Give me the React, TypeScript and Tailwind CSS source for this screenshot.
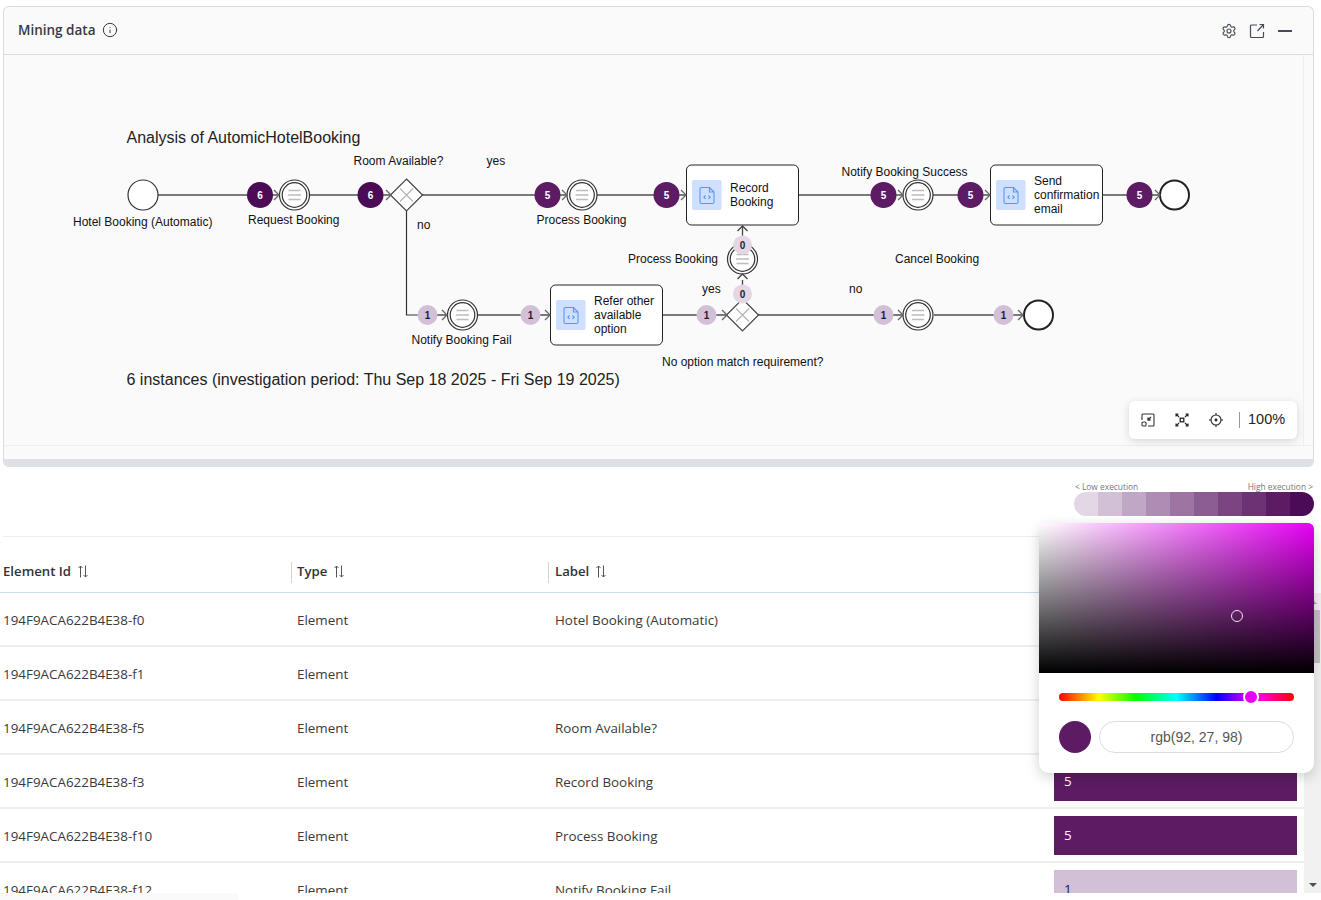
import React from 'react'
import { Info, Settings } from 'lucide-react'

const LINE = '#7a7a7a'
const HIGH = '#5c1b62'
const TOP = '#4b0b57'
const LOW = '#d2c1d6'

const legend = ['#e3d7e5', '#d2c1d6', '#bfa7c5', '#ae8db2', '#9e75a2', '#8c5d93', '#7b4582', '#6c3273', '#5c1b62', '#4b0b57']

const rows = [
  { id: '194F9ACA622B4E38-f0', label: 'Hotel Booking (Automatic)', count: 6, high: true },
  { id: '194F9ACA622B4E38-f1', label: '', count: 6, high: true },
  { id: '194F9ACA622B4E38-f5', label: 'Room Available?', count: 6, high: true },
  { id: '194F9ACA622B4E38-f3', label: 'Record Booking', count: 5, high: true },
  { id: '194F9ACA622B4E38-f10', label: 'Process Booking', count: 5, high: true },
  { id: '194F9ACA622B4E38-f12', label: 'Notify Booking Fail', count: 1, high: false },
]

const Flow = ({ d, dark }: { d: string; dark?: boolean }) => (
  <path d={d} fill="none" stroke={dark ? '#333333' : LINE} strokeWidth={dark ? 1.2 : 2} />
)

const Chevron = ({ x, y }: { x: number; y: number }) => (
  <path d={`M${x - 5} ${y - 5} L${x} ${y} L${x - 5} ${y + 5}`} fill="none" stroke="#666666" strokeWidth={1.3} />
)

const ChevronUp = ({ x, y }: { x: number; y: number }) => (
  <path d={`M${x - 5} ${y + 5} L${x} ${y} L${x + 5} ${y + 5}`} fill="none" stroke="#444444" strokeWidth={1.3} />
)

const Token = ({ x, y, n, color, r = 13, dark }: { x: number; y: number; n: number; color: string; r?: number; dark?: boolean }) => (
  <g>
    <circle cx={x} cy={y} r={r} fill={color} />
    <text x={x} y={y + 3.5} textAnchor="middle" fontSize="10" fontWeight="700" fill={dark ? '#1c1c3a' : '#ffffff'}>
      {n}
    </text>
  </g>
)

const EventNode = ({ x, y }: { x: number; y: number }) => (
  <g>
    <circle cx={x} cy={y} r={15} fill="#ffffff" stroke="#333333" strokeWidth={1.2} />
    <circle cx={x} cy={y} r={12.3} fill="#ffffff" stroke="#333333" strokeWidth={1.2} />
    <path d={`M${x - 6} ${y - 4.5} H${x + 6} M${x - 6.5} ${y} H${x + 6.5} M${x - 6} ${y + 4.5} H${x + 6}`} stroke="#bdbdbd" strokeWidth={1.4} />
  </g>
)

const Gateway = ({ x, y }: { x: number; y: number }) => (
  <g>
    <path d={`M${x} ${y - 16} L${x + 16} ${y} L${x} ${y + 16} L${x - 16} ${y} Z`} fill="#ffffff" stroke="#444444" strokeWidth={1.2} />
    <path d={`M${x - 6.5} ${y - 6.5} L${x + 6.5} ${y + 6.5} M${x + 6.5} ${y - 6.5} L${x - 6.5} ${y + 6.5}`} stroke="#b5b5b5" strokeWidth={1.2} />
  </g>
)

const EndNode = ({ x, y }: { x: number; y: number }) => (
  <circle cx={x} cy={y} r={14.5} fill="#ffffff" stroke="#222222" strokeWidth={2} />
)

const Task = ({ x, y, lines }: { x: number; y: number; lines: string[] }) => {
  const first = y + 30 - (lines.length - 1) * 7 + 4
  return (
    <g>
      <rect x={x + 0.5} y={y} width={112} height={60} rx={5} fill="#ffffff" stroke="#222222" strokeWidth={1} />
      <rect x={x + 6} y={y + 15} width={29.5} height={30} rx={2} fill="#cfe0ff" />
      <path
        d={`M${x + 15.5} ${y + 22.5} h8 l4.5 4.5 v10 a1.5 1.5 0 0 1 -1.5 1.5 h-11 a1.5 1.5 0 0 1 -1.5 -1.5 v-13 a1.5 1.5 0 0 1 1.5 -1.5 Z M${x + 23.5} ${y + 22.5} v4.5 h4.5 M${x + 19.5} ${y + 30.5} l-1.7 1.7 l1.7 1.7 M${x + 22.5} ${y + 30.5} l1.7 1.7 l-1.7 1.7`}
        fill="none"
        stroke="#5b96f7"
        strokeWidth={1.1}
      />
      {lines.map((line, i) => (
        <text key={line} x={x + 44} y={first + i * 14} fontSize="12" fill="#111111">
          {line}
        </text>
      ))}
    </g>
  )
}

const Label = ({ x, y, children }: { x: number; y: number; children: string }) => (
  <text x={x} y={y} fontSize="12" fill="#111111">
    {children}
  </text>
)

const Diagram = () => (
  <svg viewBox="4 55 1299 390" className="block w-[1299px] h-[390px] font-['Liberation_Sans',sans-serif]">
    <text x={126.5} y={143} fontSize="16" fill="#222222">Analysis of AutomicHotelBooking</text>
    <text x={126.5} y={385} fontSize="16" fill="#222222">6 instances (investigation period: Thu Sep 18 2025 - Fri Sep 19 2025)</text>

    <Flow d="M158 195 H280 M310 195 H391 M422 195 H574 M597 195 H686 M799 195 H910 M933 195 H990 M1103 195 H1160" />
    <Flow d="M406.5 211 V315 H420" dark />
    <Flow d="M420 315 H447 M478 315 H550 M662 315 H727 M758 315 H910 M934 315 H1024" />
    <path d="M742.5 299 V280 M742.5 244 V227" stroke="#444444" strokeWidth={1.3} />

    <circle cx={143} cy={195} r={15} fill="#ffffff" stroke="#333333" strokeWidth={1.2} />
    <EventNode x={294.5} y={195} />
    <Gateway x={406.5} y={195} />
    <EventNode x={582} y={195} />
    <EventNode x={918} y={195} />
    <EndNode x={1174.5} y={195} />
    <EventNode x={462.5} y={315} />
    <Gateway x={742.5} y={315} />
    <EventNode x={742.5} y={259} />
    <EventNode x={918} y={315} />
    <EndNode x={1038.5} y={315} />

    <Task x={686} y={165} lines={['Record', 'Booking']} />
    <Task x={990} y={165} lines={['Send', 'confirmation', 'email']} />
    <Task x={550} y={285} lines={['Refer other', 'available', 'option']} />

    <Chevron x={279} y={195} />
    <Chevron x={391} y={195} />
    <Chevron x={567} y={195} />
    <Chevron x={686} y={195} />
    <Chevron x={903} y={195} />
    <Chevron x={990} y={195} />
    <Chevron x={1160} y={195} />
    <Chevron x={447} y={315} />
    <Chevron x={550} y={315} />
    <Chevron x={727} y={315} />
    <Chevron x={903} y={315} />
    <Chevron x={1023} y={315} />
    <ChevronUp x={742.5} y={274} />
    <ChevronUp x={742.5} y={226} />

    <Token x={260} y={195} n={6} color={TOP} />
    <Token x={370.5} y={195} n={6} color={TOP} />
    <Token x={547.5} y={195} n={5} color={HIGH} />
    <Token x={666.5} y={195} n={5} color={HIGH} />
    <Token x={883.5} y={195} n={5} color={HIGH} />
    <Token x={970.5} y={195} n={5} color={HIGH} />
    <Token x={1139.5} y={195} n={5} color={HIGH} />
    <Token x={427.5} y={315} n={1} color={LOW} r={10} dark />
    <Token x={530.5} y={315} n={1} color={LOW} r={10} dark />
    <Token x={706.5} y={315} n={1} color={LOW} r={10} dark />
    <Token x={883.5} y={315} n={1} color={LOW} r={10} dark />
    <Token x={1003.5} y={315} n={1} color={LOW} r={10} dark />
    <Token x={742.5} y={294} n={0} color="#e3d7e5" r={9.5} dark />
    <Token x={742.5} y={245} n={0} color="#e3d7e5" r={9.5} dark />

    <Label x={73} y={226}>Hotel Booking (Automatic)</Label>
    <Label x={248} y={224}>Request Booking</Label>
    <Label x={353.5} y={165}>Room Available?</Label>
    <Label x={486.5} y={165}>yes</Label>
    <Label x={417} y={229}>no</Label>
    <Label x={536.5} y={224}>Process Booking</Label>
    <Label x={841.5} y={176}>Notify Booking Success</Label>
    <Label x={628} y={263}>Process Booking</Label>
    <Label x={895} y={263}>Cancel Booking</Label>
    <Label x={702} y={293}>yes</Label>
    <Label x={849} y={293}>no</Label>
    <Label x={411.5} y={344}>Notify Booking Fail</Label>
    <Label x={662} y={366}>No option match requirement?</Label>
  </svg>
)

const ZoomBar = () => (
  <div className="absolute left-[1125px] top-[346px] w-[168px] h-[38px] flex items-center bg-white rounded-md shadow-[0_2px_8px_rgba(0,0,0,0.15)] text-[#222222]">
    <svg viewBox="0 0 14 14" className="w-[14px] h-[14px] ml-[12px] text-[#333333]" fill="none" stroke="currentColor" strokeWidth="1.1">
      <path d="M1 7V2a1 1 0 0 1 1-1h10a1 1 0 0 1 1 1v10a1 1 0 0 1-1 1H7" />
      <rect x="1" y="9" width="4" height="4" rx="1" />
      <path d="M10 4 7 7M7 4.5V7h2.5" strokeWidth="1.3" />
    </svg>
    <svg viewBox="0 0 14 14" className="w-[14px] h-[14px] ml-[20px]" fill="none" stroke="currentColor" strokeWidth="1.1">
      <path d="M1 3.5V1h2.5M1 1l3 3M13 3.5V1h-2.5M13 1l-3 3M13 10.5V13h-2.5M13 13l-3-3M1 10.5V13h2.5M1 13l3-3" />
      <rect x="5.2" y="5.2" width="3.6" height="3.6" strokeWidth="1.3" />
    </svg>
    <svg viewBox="0 0 14 14" className="w-[14px] h-[14px] ml-[20px]" fill="none" stroke="currentColor" strokeWidth="1.1">
      <circle cx="7" cy="7" r="5" />
      <circle cx="7" cy="7" r="0.9" fill="currentColor" />
      <path d="M7 0v2M7 12v2M0 7h2M12 7h2" />
    </svg>
    <div className="w-px h-[16px] bg-[#999999] ml-[16px]" />
    <span className="ml-[8px] text-[14.5px] font-['Liberation_Sans',sans-serif]">100%</span>
  </div>
)

const Header = () => (
  <div className="h-[48px] flex items-center border-b border-[#dcdcdc] pl-[14px] pr-[21px]">
    <span className="text-[13.5px] font-semibold text-[#333b45] font-['Open_Sans',sans-serif]">Mining data</span>
    <Info size={16} strokeWidth={1.5} className="ml-[6px] text-[#333b45] -mt-[2px]" />
    <div className="ml-auto flex items-center text-[#444c55]">
      <Settings size={16} strokeWidth={1.7} />
      <svg viewBox="0 0 16 16" className="w-[16px] h-[16px] ml-[12px]" fill="none" stroke="currentColor" strokeWidth="1.2">
        <path d="M8 2H2.5a1 1 0 0 0-1 1v10.5a1 1 0 0 0 1 1h11a1 1 0 0 0 1-1V9" />
        <path d="M8.5 8 14.5 1.5M10.5 1.5h4v4" />
      </svg>
      <div className="w-[14px] h-[1.5px] bg-[#444c55] ml-[13px] mt-[1px]" />
    </div>
  </div>
)

const SortArrows = () => (
  <svg viewBox="0 0 10 13" className="w-[10px] h-[13px] ml-[7px] -mt-[2px] text-[#555555]" fill="none" stroke="currentColor" strokeWidth="1">
    <path d="M2.5 12.5V1M0.5 3 2.5 1l2 2M7.5 0.5V12M5.5 10l2 2 2-2" />
  </svg>
)

const SortHead = ({ title, width, divider }: { title: string; width: string; divider?: string }) => (
  <div className={`${width} flex items-center h-[21px]`}>
    {divider && <div className={`w-px h-[21px] bg-[#d4d4d4] ${divider}`} />}
    <span className="text-[13.2px] font-semibold text-[#333333]">{title}</span>
    <SortArrows />
  </div>
)

const Row = ({ id, label, count, high }: { id: string; label: string; count: number; high: boolean }) => (
  <div className="h-[54px] flex items-center pl-[3px] pt-[2px] border-b-2 border-[#eeeeee] text-[13.4px] text-[#3a3a3a] shrink-0">
    <div className="w-[294px]">{id}</div>
    <div className="w-[258px]">Element</div>
    <div className="w-[499px]">{label}</div>
    <div className={`w-[243px] h-[39px] -mt-[2px] flex items-center pl-[10px] ${high ? 'bg-[#5c1b62] text-white' : 'bg-[#d2c1d6] text-[#222222]'}`}>
      {count}
    </div>
  </div>
)

const Scrollbar = () => (
  <div className="w-[17px] h-full bg-[#f1f1f1] flex flex-col items-center shrink-0">
    <div className="h-[17px] flex items-center justify-center">
      <div className="w-0 h-0 border-x-[4px] border-x-transparent border-b-[4px] border-b-[#a3a3a3]" />
    </div>
    <div className="w-[15px] h-[53px] bg-[#c1c1c1]" />
    <div className="mt-auto h-[17px] flex items-center justify-center">
      <div className="w-0 h-0 border-x-[4px] border-x-transparent border-t-[4px] border-t-[#505050]" />
    </div>
  </div>
)

const ColorPicker = () => (
  <div className="absolute left-[1039px] top-[523px] w-[275px] h-[250px] bg-white rounded-[10px] shadow-[0_4px_14px_rgba(0,0,0,0.18)]">
    <div className="relative h-[150px] rounded-t-[6px] bg-[linear-gradient(to_top,#000000,rgba(0,0,0,0)),linear-gradient(to_right,#ffffff,#e600f5)]">
      <div className="absolute left-[192px] top-[87px] w-[12px] h-[12px] rounded-full border border-[#e8e8e8]" />
    </div>
    <div className="relative mt-[20px] mx-[20px] h-[8px] rounded-full bg-[linear-gradient(to_right,#ff0000,#ffff00_17%,#00ff00_33%,#00ffff_50%,#0000ff_67%,#ff00ff_83%,#ff0000)]">
      <div className="absolute left-[184px] -top-[4px] w-[16px] h-[16px] rounded-full bg-[#e600f5] border-2 border-white" />
    </div>
    <div className="flex items-center mt-[20px] mx-[20px]">
      <div className="w-[32px] h-[32px] rounded-full bg-[#5c1b62]" />
      <div className="ml-[8px] flex-1 h-[32px] rounded-full border border-[#dddddd] flex items-center justify-center text-[14px] text-[#555555] font-['Liberation_Sans',sans-serif]">
        rgb(92, 27, 98)
      </div>
    </div>
  </div>
)

export default function App() {
  return (
    <div className="relative w-[1321px] h-[900px] overflow-hidden bg-white font-['Open_Sans',sans-serif]">
      <div className="pt-[6px] pl-[3px]">
        <div className="w-[1311px] h-[461px] rounded-[6px] border border-[#dcdcdc] border-b-0 bg-[#fafafa] overflow-hidden flex flex-col">
          <Header />
          <div className="relative h-[391px] border-b border-[#efefef]">
            <Diagram />
            <div className="absolute left-[1299px] top-0 w-px h-full bg-[#efefef]" />
            <ZoomBar />
          </div>
          <div className="h-[13px]" />
          <div className="flex-1 bg-[#dde0e4]" />
        </div>
      </div>

      <div className="h-[70px] w-[1304px] ml-[3px] border-b border-[#eeeeee]" />
      <div className="absolute left-[1075px] top-[482px] w-[238px]">
        <div className="flex justify-between text-[8.4px] leading-[10px] text-[#777777]">
          <span>&lt; Low execution</span>
          <span>High execution &gt;</span>
        </div>
      </div>
      <div className="absolute left-[1074px] top-[492px] w-[240px] flex h-[24px] rounded-full overflow-hidden">
        {legend.map((c) => (
          <div key={c} className="flex-1" style={{ backgroundColor: c }} />
        ))}
      </div>

      <div className="h-[56px] w-[1304px] pl-[3px] pt-[15px] flex items-center border-b border-[#c9dfe8]">
        <SortHead title="Element Id" width="w-[294px]" />
        <SortHead title="Type" width="w-[258px]" divider="-ml-[6px] mr-[5px]" />
        <SortHead title="Label" width="w-[499px]" divider="-ml-[7px] mr-[6px]" />
      </div>

      <div className="h-[300px] flex overflow-hidden">
        <div className="w-[1304px] flex flex-col">
          {rows.map((r) => (
            <Row key={r.id} {...r} />
          ))}
        </div>
        <Scrollbar />
      </div>
      <div className="h-[7px] w-[238px] bg-[#fafafa]" />

      <ColorPicker />
    </div>
  )
}
